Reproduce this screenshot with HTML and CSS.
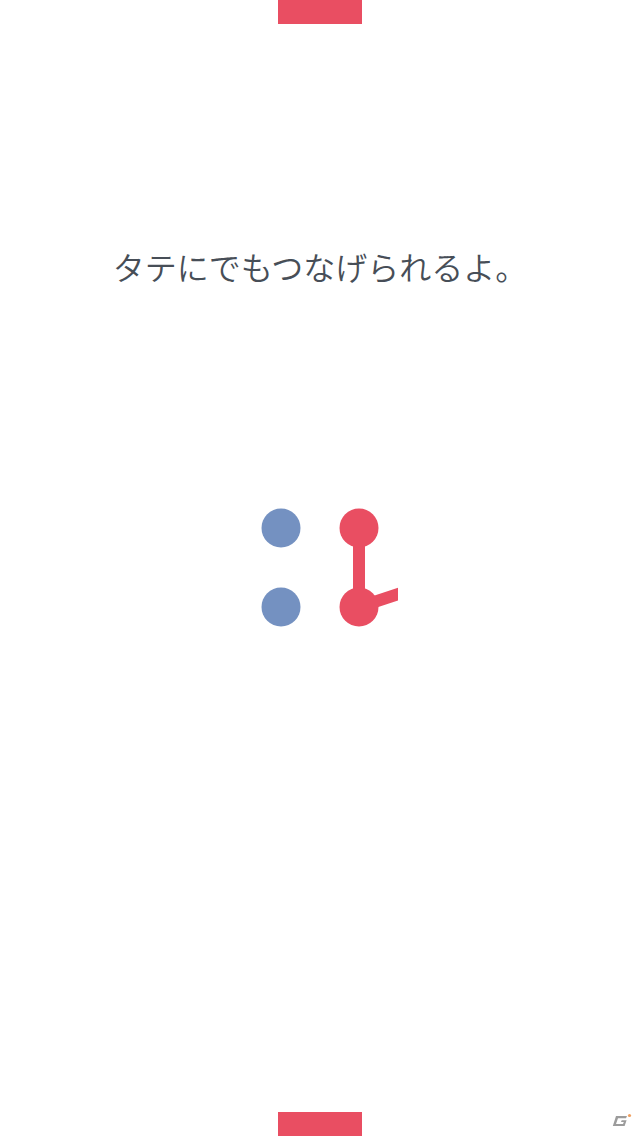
FILE: index.html
```html
<!DOCTYPE html>
<html lang="ja">
<head>
  <meta charset="UTF-8">
  <meta name="viewport" content="width=device-width, initial-scale=1.0">
  <title>タテにでもつなげられるよ。</title>
  <link rel="stylesheet" href="styles.css">
</head>
<body>
  <div class="screen">
    <div class="bar"></div>

    <p class="hint">タテにでもつなげられるよ。</p>

    <svg class="board" width="160" height="140" viewBox="0 0 160 140">
      <defs>
        <clipPath id="cut"><rect x="0" y="0" width="158" height="140"/></clipPath>
      </defs>
      <g clip-path="url(#cut)">
        <line x1="119" y1="28" x2="119" y2="107" stroke="#e94e62" stroke-width="12"/>
        <line x1="119" y1="107" x2="172" y2="89.5" stroke="#e94e62" stroke-width="12"/>
      </g>
      <circle cx="41" cy="28" r="19.5" fill="#7491c1"/>
      <circle cx="41" cy="107" r="19.5" fill="#7491c1"/>
      <circle cx="119" cy="28" r="19.5" fill="#e94e62"/>
      <circle cx="119" cy="107" r="19.5" fill="#e94e62"/>
    </svg>

    <div class="bar bar-bottom"></div>

    <svg class="mark" width="22" height="16" viewBox="0 0 22 16">
      <path d="M5 3 H16 L15 5.2 H7 L5 11 H12 L12.8 9 H10 L10.7 7.2 H15.6 L13.6 13 H1.8 Z" fill="#9c9c9c"/>
      <circle cx="18.5" cy="2.5" r="1.6" fill="#f0a060"/>
    </svg>
  </div>
</body>
</html>
```

FILE: styles.css
```css
* { box-sizing: border-box; margin: 0; padding: 0; }
body {
  background: #fff;
  font-family: "Noto Sans CJK JP", "Noto Sans", sans-serif;
}
.screen {
  position: relative;
  width: 640px;
  height: 1136px;
  display: flex;
  flex-direction: column;
  align-items: center;
  overflow: hidden;
}
.bar {
  width: 84px;
  height: 24px;
  background: #e94e62;
}
.bar-bottom { margin-top: auto; }
.hint {
  margin-top: 222px;
  font-size: 32px;
  line-height: 40px;
  font-weight: 350;
  color: #474e57;
  text-align: center;
}
.board {
  display: block;
  margin-top: 214px;
}
.mark {
  position: absolute;
  right: 7px;
  bottom: 7px;
}
```
